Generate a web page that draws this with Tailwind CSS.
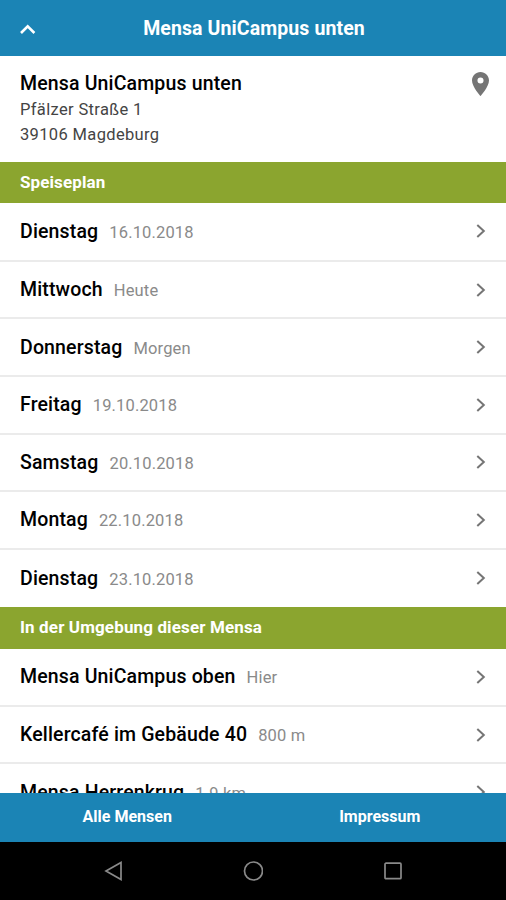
<!DOCTYPE html>
<html lang="de">
<head>
    <meta charset="UTF-8">
    <meta name="viewport" content="width=device-width, initial-scale=1.0">
    <title>Mensa UniCampus unten</title>
    <script src="https://cdn.jsdelivr.net/npm/@tailwindcss/browser@4"></script>
</head>
<body class="bg-white font-['Roboto',sans-serif] text-black">
    <svg class="hidden">
        <symbol id="chevron" viewBox="0 0 10 14">
            <path d="M1.3 1L7.8 7L1.3 13" fill="none" stroke="currentColor" stroke-width="2"/>
        </symbol>
    </svg>
    <div class="flex flex-col h-[900px] w-[506px] overflow-hidden">
        <!-- Header -->
        <header class="h-14 shrink-0 bg-[#1b84b5] text-white grid grid-cols-[56px_1fr_54px] items-center">
            <svg class="ml-5 mt-0.5 w-4 h-3" viewBox="0 0 16 12" fill="none" stroke="currentColor" stroke-width="2.6">
                <path d="M1 10L7.7 3.3L14.4 10"/>
            </svg>
            <h1 class="pt-px text-center text-[19.5px] font-bold tracking-[0.1px] whitespace-nowrap">Mensa UniCampus unten</h1>
        </header>

        <main class="flex-1 min-h-0 overflow-hidden">
            <!-- Address -->
            <section class="h-[106px] pl-5 pr-[17px] pt-[15px] flex justify-between">
                <div>
                    <h2 class="text-[19.5px] leading-[26px] font-medium tracking-[0.15px]">Mensa UniCampus unten</h2>
                    <p class="text-[16.5px] leading-[25px] text-[#444] tracking-[0.35px]">Pfälzer Straße 1<br>39106 Magdeburg</p>
                </div>
                <svg class="mt-px w-[17px] h-6 text-[#757575]" viewBox="5 2 14 20" preserveAspectRatio="none" fill="currentColor">
                    <path d="M12 2C8.13 2 5 5.13 5 9c0 5.25 7 13 7 13s7-7.75 7-13c0-3.87-3.13-7-7-7zm0 9.500a2.500 2.500 0 1 1 0-5 2.500 2.500 0 0 1 0 5z"/>
                </svg>
            </section>

            <!-- Menu days -->
            <h3 class="h-[41px] px-5 bg-[#8ba52f] text-white text-[17px] leading-[40px] font-bold tracking-[0.1px]">Speiseplan</h3>
            <ul>
                <li class="h-[58.75px] px-5 flex items-center justify-between border-b-2 border-[#ebebeb]">
                    <p class="text-[19.5px] font-medium tracking-[0.15px]">Dienstag<span class="ml-[11px] text-[16.5px] font-normal text-[#8a8a8a]">16.10.2018</span></p>
                    <svg class="w-2.5 h-3.5 text-[#757575]"><use href="#chevron"/></svg>
                </li>
                <li class="h-[57.6px] px-5 flex items-center justify-between border-b-2 border-[#ebebeb]">
                    <p class="text-[19.5px] font-medium tracking-[0.15px]">Mittwoch<span class="ml-[11px] text-[16.5px] font-normal text-[#8a8a8a]">Heute</span></p>
                    <svg class="w-2.5 h-3.5 text-[#757575]"><use href="#chevron"/></svg>
                </li>
                <li class="h-[57.6px] px-5 flex items-center justify-between border-b-2 border-[#ebebeb]">
                    <p class="text-[19.5px] font-medium tracking-[0.15px]">Donnerstag<span class="ml-[11px] text-[16.5px] font-normal text-[#8a8a8a]">Morgen</span></p>
                    <svg class="w-2.5 h-3.5 text-[#757575]"><use href="#chevron"/></svg>
                </li>
                <li class="h-[57.6px] px-5 flex items-center justify-between border-b-2 border-[#ebebeb]">
                    <p class="text-[19.5px] font-medium tracking-[0.15px]">Freitag<span class="ml-[11px] text-[16.5px] font-normal text-[#8a8a8a]">19.10.2018</span></p>
                    <svg class="w-2.5 h-3.5 text-[#757575]"><use href="#chevron"/></svg>
                </li>
                <li class="h-[57.6px] px-5 flex items-center justify-between border-b-2 border-[#ebebeb]">
                    <p class="text-[19.5px] font-medium tracking-[0.15px]">Samstag<span class="ml-[11px] text-[16.5px] font-normal text-[#8a8a8a]">20.10.2018</span></p>
                    <svg class="w-2.5 h-3.5 text-[#757575]"><use href="#chevron"/></svg>
                </li>
                <li class="h-[57.6px] px-5 flex items-center justify-between border-b-2 border-[#ebebeb]">
                    <p class="text-[19.5px] font-medium tracking-[0.15px]">Montag<span class="ml-[11px] text-[16.5px] font-normal text-[#8a8a8a]">22.10.2018</span></p>
                    <svg class="w-2.5 h-3.5 text-[#757575]"><use href="#chevron"/></svg>
                </li>
                <li class="h-[57.25px] px-5 flex items-center justify-between">
                    <p class="text-[19.5px] font-medium tracking-[0.15px]">Dienstag<span class="ml-[11px] text-[16.5px] font-normal text-[#8a8a8a]">23.10.2018</span></p>
                    <svg class="w-2.5 h-3.5 text-[#757575]"><use href="#chevron"/></svg>
                </li>
            </ul>

            <!-- Nearby -->
            <h3 class="h-[42px] px-5 bg-[#8ba52f] text-white text-[17px] leading-[40px] font-bold tracking-[0.13px]">In der Umgebung dieser Mensa</h3>
            <ul>
                <li class="h-[57.75px] px-5 flex items-center justify-between border-b-2 border-[#ebebeb]">
                    <p class="text-[19.5px] font-medium tracking-[0.15px]">Mensa UniCampus oben<span class="ml-[11px] text-[16.5px] font-normal text-[#8a8a8a]">Hier</span></p>
                    <svg class="w-2.5 h-3.5 text-[#757575]"><use href="#chevron"/></svg>
                </li>
                <li class="h-[57.75px] px-5 flex items-center justify-between border-b-2 border-[#ebebeb]">
                    <p class="text-[19.5px] font-medium tracking-[0.15px]">Kellercafé im Gebäude 40<span class="ml-[11px] text-[16.5px] font-normal text-[#8a8a8a]">800 m</span></p>
                    <svg class="w-2.5 h-3.5 text-[#757575]"><use href="#chevron"/></svg>
                </li>
                <li class="h-[55.75px] px-5 flex items-center justify-between">
                    <p class="text-[19.5px] font-medium tracking-[0.15px]">Mensa Herrenkrug<span class="ml-[11px] text-[16.5px] font-normal text-[#8a8a8a]">1.9 km</span></p>
                    <svg class="w-2.5 h-3.5 text-[#757575]"><use href="#chevron"/></svg>
                </li>
            </ul>
        </main>

        <!-- Footer tabs -->
        <footer class="h-[49px] shrink-0 bg-[#1b84b5] text-white grid grid-cols-2 pl-px text-center text-base leading-[47px] font-bold">
            <a href="#">Alle Mensen</a>
            <a href="#">Impressum</a>
        </footer>

        <!-- Android navigation -->
        <nav class="h-[58px] shrink-0 bg-black text-[#8a8a8a] flex justify-between items-center px-[103px]">
            <svg class="w-5 h-5" viewBox="0 0 20 20" fill="none" stroke="currentColor" stroke-width="1.7">
                <path d="M18 1.500V18.500L3 10Z"/>
            </svg>
            <svg class="w-5 h-5" viewBox="0 0 20 20" fill="none" stroke="currentColor" stroke-width="1.7">
                <circle cx="10.500" cy="10" r="9"/>
            </svg>
            <svg class="w-5 h-5" viewBox="0 0 20 20" fill="none" stroke="currentColor" stroke-width="1.7">
                <rect x="2" y="2.200" width="16" height="15.500" rx="1"/>
            </svg>
        </nav>
    </div>
</body>
</html>
